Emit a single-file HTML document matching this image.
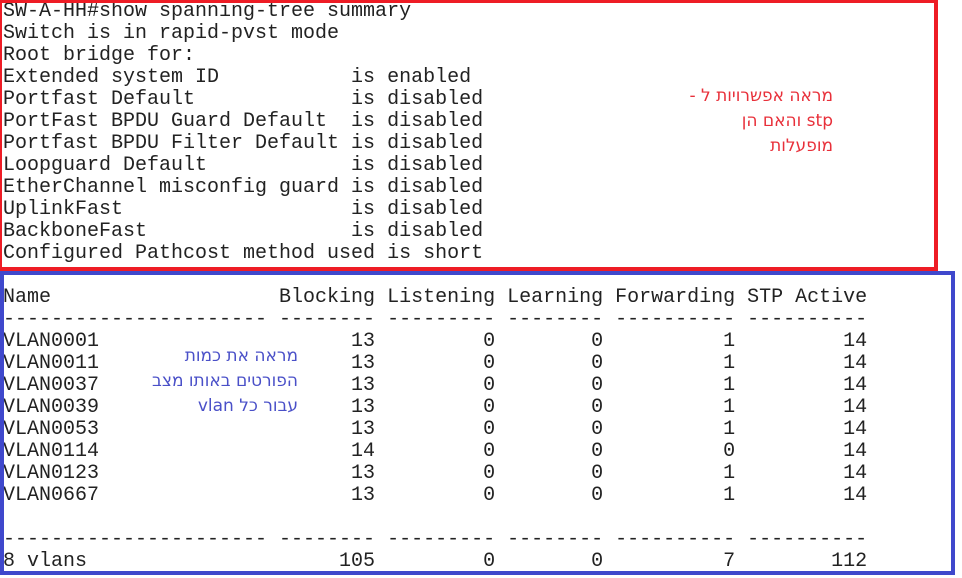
<!DOCTYPE html>
<html><head><meta charset="utf-8"><style>
html,body{margin:0;padding:0;background:#fff;width:962px;height:578px;overflow:hidden;position:relative}
pre{position:absolute;left:3px;top:1px;margin:0;font-family:"Liberation Mono",monospace;font-size:20px;line-height:22px;color:#222;white-space:pre}
.rb{position:absolute;left:-2px;top:-1px;width:932px;height:264px;border:4px solid #ee1c25}
.bb{position:absolute;left:0;top:271px;width:947px;height:296px;border:4px solid #3f48cc}
.note{position:absolute;font-family:"DejaVu Sans","Liberation Sans",sans-serif;font-size:17px;line-height:25px;text-align:right;direction:rtl}
</style></head><body>
<pre>SW-A-HH#show spanning-tree summary
Switch is in rapid-pvst mode
Root bridge for:
Extended system ID           is enabled
Portfast Default             is disabled
PortFast BPDU Guard Default  is disabled
Portfast BPDU Filter Default is disabled
Loopguard Default            is disabled
EtherChannel misconfig guard is disabled
UplinkFast                   is disabled
BackboneFast                 is disabled
Configured Pathcost method used is short

Name                   Blocking Listening Learning Forwarding STP Active
---------------------- -------- --------- -------- ---------- ----------
VLAN0001                     13         0        0          1         14
VLAN0011                     13         0        0          1         14
VLAN0037                     13         0        0          1         14
VLAN0039                     13         0        0          1         14
VLAN0053                     13         0        0          1         14
VLAN0114                     14         0        0          0         14
VLAN0123                     13         0        0          1         14
VLAN0667                     13         0        0          1         14

---------------------- -------- --------- -------- ---------- ----------
8 vlans                     105         0        0          7        112</pre>
<div class="rb"></div>
<div class="bb"></div>
<div class="note" style="color:#e8303a;right:129px;top:84px;width:220px">מראה אפשרויות ל -<br>stp והאם הן<br>מופעלות</div>
<div class="note" style="color:#4a50c8;right:664px;top:344px;width:220px">מראה את כמות<br>הפורטים באותו מצב<br>עבור כל vlan</div>
</body></html>
